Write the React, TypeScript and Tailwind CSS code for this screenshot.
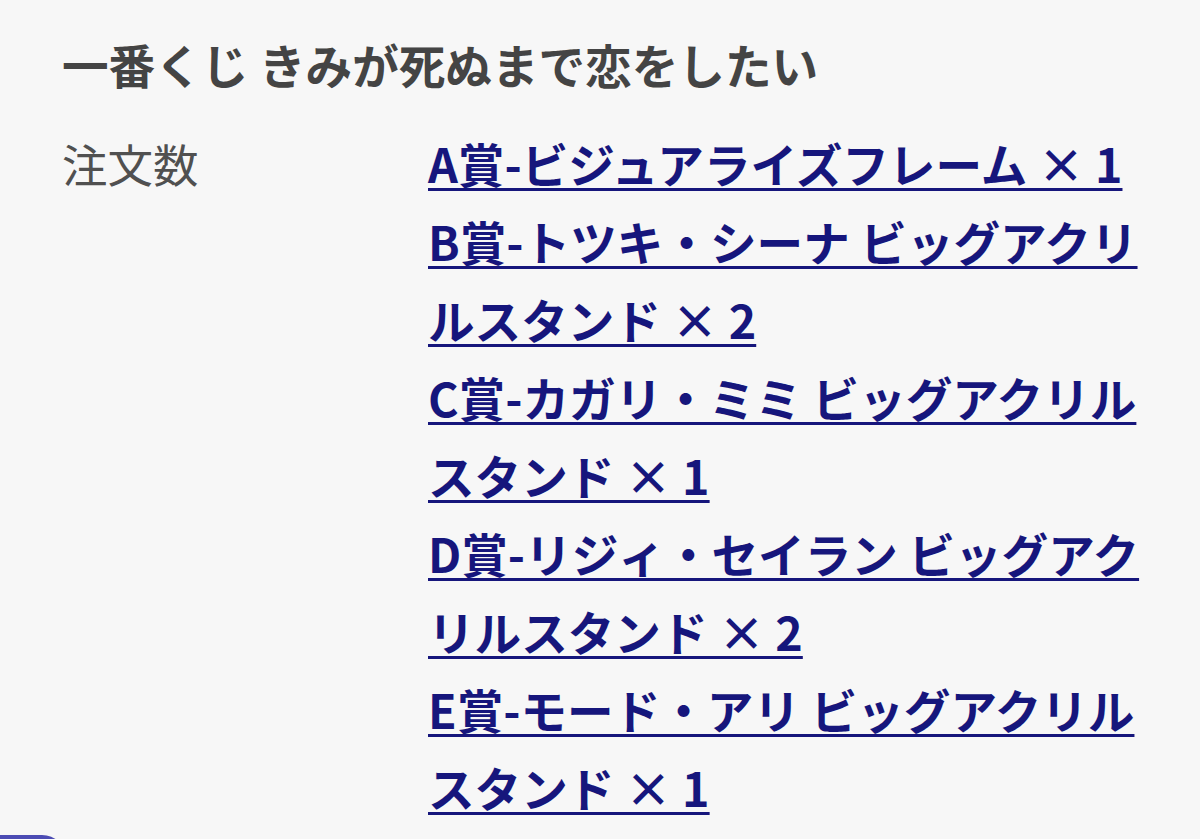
const prizes = [
  "A賞-ビジュアライズフレーム × 1",
  "B賞-トツキ・シーナ ビッグアクリルスタンド × 2",
  "C賞-カガリ・ミミ ビッグアクリルスタンド × 1",
  "D賞-リジィ・セイラン ビッグアクリルスタンド × 2",
  "E賞-モード・アリ ビッグアクリルスタンド × 1",
];

export default function App() {
  return (
    <div
      className="min-h-screen bg-[#f7f7f7] pt-[30px]"
      style={{ fontFamily: '"Noto Sans CJK JP", "Noto Sans", sans-serif' }}
    >
      <div className="pl-[62px] pr-[40px]">
        <h1 className="text-[46.6px] font-bold leading-[68px] text-[#444444]">
          一番くじ きみが死ぬまで恋をしたい
        </h1>
        <div className="mt-[26px] flex">
          <div className="w-[366px] shrink-0 text-[45.5px] leading-[78px] text-[#505050]">
            注文数
          </div>
          <ul className="w-[722px] shrink-0">
            {prizes.map((p) => (
              <li key={p}>
                <a
                  href="#"
                  className="text-[46.6px] font-bold leading-[78px] text-[#16167c] underline decoration-[3px] underline-offset-[5px]"
                >
                  {p}
                </a>
              </li>
            ))}
          </ul>
        </div>
      </div>
      {/* order button peeking at the bottom edge */}
      <div className="mt-[9px] h-[24px] w-[66px] rounded-tr-[24px] bg-[#4c4cb4]" />
    </div>
  );
}
